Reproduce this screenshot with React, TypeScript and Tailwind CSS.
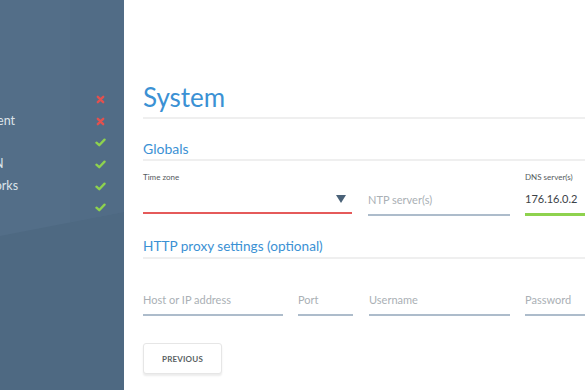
import React from "react";

const XIcon = () => (
  <svg width="9" height="9" viewBox="0 0 10 10">
    <path d="M2 2 L8 8 M8 2 L2 8" stroke="#e2514f" strokeWidth="2.6" strokeLinecap="round" />
  </svg>
);

const Check = () => (
  <svg width="11" height="9" viewBox="0 0 12 10">
    <path d="M1.5 5.2 L4.6 8 L10.5 1.8" stroke="#8ed24e" strokeWidth="2.6" fill="none" strokeLinecap="round" strokeLinejoin="round" />
  </svg>
);

const items: { label: string; ok: boolean }[] = [
  { label: "License", ok: false },
  { label: "Management", ok: false },
  { label: "Install", ok: true },
  { label: "Client VPN", ok: true },
  { label: "Site networks", ok: true },
  { label: "System", ok: true },
];

function Field({ w, placeholder, ml }: { w: string; placeholder: string; ml: string }) {
  return (
    <div className={`${w} ${ml} shrink-0`}>
      <div className="h-[34px] flex items-end pb-[8px] border-b-2 border-[#adbccb] text-[11px] leading-[13px] text-[#aab0b5]">
        {placeholder}
      </div>
    </div>
  );
}

export default function App() {
  return (
    <div
      className="flex h-[390px] w-[585px] overflow-hidden bg-white"
      style={{ fontFamily: "Lato, 'Open Sans', sans-serif" }}
    >
      <aside className="relative w-[124px] shrink-0 bg-[#4e6982] overflow-hidden">
        <svg className="absolute inset-0" width="124" height="390" viewBox="0 0 124 390">
          <polygon points="0,0 124,0 124,212 0,236" fill="#536e88" />
          <polygon points="70,0 124,0 124,212 70,222" fill="#516c86" />
        </svg>
        <div className="relative pt-[89px] flex flex-col">
          {items.map((it) => (
            <div key={it.label} className="relative h-[21.6px] flex items-center">
              <span className="ml-[-57px] w-[140px] whitespace-nowrap text-[12.5px] text-[#dde4ea]">
                {it.label}
              </span>
              <span className="absolute left-[94px] flex w-[12px] justify-center">
                {it.ok ? <Check /> : <XIcon />}
              </span>
            </div>
          ))}
        </div>
      </aside>
      <main className="flex-1 min-w-0 pl-[19px] pt-[81px]">
        <div className="w-[600px]">
          <h1 className="text-[26px] leading-[32px] text-[#3b91d4] pb-[4px] border-b-2 border-[#efefef]">
            System
          </h1>
          <h2 className="mt-[21px] text-[14px] leading-[17px] text-[#3b91d4] pb-[2px] border-b-2 border-[#efefef]">
            Globals
          </h2>
          <div className="mt-[11px] flex">
            <div className="w-[209px] shrink-0">
              <div className="h-[10px] text-[8px] leading-[10px] text-[#555b60]">Time zone</div>
              <div className="h-[32px] flex items-center justify-end pr-[6px] pt-[4px] border-b-2 border-[#e55a5a]">
                <svg width="10" height="8" viewBox="0 0 10 8">
                  <polygon points="0,0 10,0 5,8" fill="#4a6278" />
                </svg>
              </div>
            </div>
            <div className="ml-[16px] w-[142px] shrink-0">
              <div className="h-[10px]" />
              <div className="h-[34px] flex items-end pb-[8px] border-b-2 border-[#adbccb] text-[11px] leading-[13px] text-[#aab0b5]">
                NTP server(s)
              </div>
            </div>
            <div className="ml-[15px] w-[141px] shrink-0">
              <div className="h-[10px] text-[8px] leading-[10px] text-[#555b60]">DNS server(s)</div>
              <div className="h-[34px] flex items-end pb-[8px] border-b-[3px] border-[#8ed24e] text-[11px] leading-[13px] text-[#3c4247]">
                176.16.0.2
              </div>
            </div>
          </div>
          <h2 className="mt-[22px] text-[13.6px] leading-[17px] text-[#3b91d4] pb-[2px] border-b-2 border-[#efefef]">
            HTTP proxy settings (optional)
          </h2>
          <div className="mt-[23px] flex">
            <Field w="w-[140px]" ml="" placeholder="Host or IP address" />
            <Field w="w-[55px]" ml="ml-[15px]" placeholder="Port" />
            <Field w="w-[141px]" ml="ml-[16px]" placeholder="Username" />
            <Field w="w-[141px]" ml="ml-[15px]" placeholder="Password" />
          </div>
          <button className="mt-[27px] w-[79px] h-[31px] rounded-[3px] border border-[#e6e6e6] bg-white shadow-[0_2px_2px_rgba(0,0,0,0.08)] text-[8px] font-bold tracking-[0.2px] text-[#5a5f63]">
            PREVIOUS
          </button>
        </div>
      </main>
    </div>
  );
}
